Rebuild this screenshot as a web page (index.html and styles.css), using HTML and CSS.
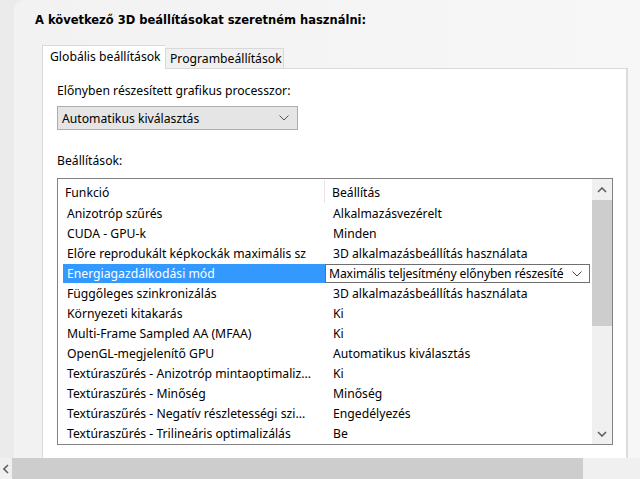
FILE: index.html
```html
<!DOCTYPE html>
<html lang="hu">
<head>
<meta charset="utf-8">
<title>3D beállítások</title>
<link rel="stylesheet" href="styles.css">
</head>
<body>
<div class="screen">
  <div class="panel">
    <h1 class="title">A következő 3D beállításokat szeretném használni:</h1>
    <div class="tabs">
      <div class="tab active">Globális beállítások</div>
      <div class="tab">Programbeállítások</div>
    </div>
    <div class="tabpanel">
      <div class="label gpu-label">Előnyben részesített grafikus processzor:</div>
      <div class="dropdown">
        <span>Automatikus kiválasztás</span>
        <svg class="chev" width="10" height="6" viewBox="0 0 10 6"><path d="M0.5 0.5 L5 5 L9.5 0.5" fill="none" stroke="#555" stroke-width="1"/></svg>
      </div>
      <div class="label settings-label">Beállítások:</div>
      <div class="listbox">
        <div class="list">
          <div class="row header"><div class="c1">Funkció</div><div class="divider"></div><div class="c2">Beállítás</div></div>
          <div class="row"><div class="c1">Anizotróp szűrés</div><div class="c2">Alkalmazásvezérelt</div></div>
          <div class="row"><div class="c1">CUDA - GPU-k</div><div class="c2">Minden</div></div>
          <div class="row"><div class="c1">Előre reprodukált képkockák maximális sz</div><div class="c2">3D alkalmazásbeállítás használata</div></div>
          <div class="row selected">
            <div class="c1"><div class="sel">Energiagazdálkodási mód</div></div>
            <div class="c2"><div class="combo"><span>Maximális teljesítmény előnyben részesíté</span><svg class="chev" width="10" height="6" viewBox="0 0 10 6"><path d="M0.5 0.5 L5 5 L9.5 0.5" fill="none" stroke="#444" stroke-width="1"/></svg></div></div>
          </div>
          <div class="row"><div class="c1">Függőleges szinkronizálás</div><div class="c2">3D alkalmazásbeállítás használata</div></div>
          <div class="row"><div class="c1">Környezeti kitakarás</div><div class="c2">Ki</div></div>
          <div class="row"><div class="c1">Multi-Frame Sampled AA (MFAA)</div><div class="c2">Ki</div></div>
          <div class="row"><div class="c1">OpenGL-megjelenítő GPU</div><div class="c2">Automatikus kiválasztás</div></div>
          <div class="row"><div class="c1">Textúraszűrés - Anizotróp mintaoptimaliz...</div><div class="c2">Ki</div></div>
          <div class="row"><div class="c1">Textúraszűrés - Minőség</div><div class="c2">Minőség</div></div>
          <div class="row"><div class="c1">Textúraszűrés - Negatív részletességi szi...</div><div class="c2">Engedélyezés</div></div>
          <div class="row"><div class="c1">Textúraszűrés - Trilineáris optimalizálás</div><div class="c2">Be</div></div>
        </div>
        <div class="vscroll">
          <div class="arrow up"><svg width="10" height="6" viewBox="0 0 10 6"><path d="M1 5 L5 1 L9 5" fill="none" stroke="#606060" stroke-width="1.6"/></svg></div>
          <div class="track"><div class="thumb"></div></div>
          <div class="arrow down"><svg width="10" height="6" viewBox="0 0 10 6"><path d="M1 1 L5 5 L9 1" fill="none" stroke="#606060" stroke-width="1.6"/></svg></div>
        </div>
      </div>
    </div>
  </div>
  <div class="hscroll">
    <div class="harrow"><svg width="6" height="10" viewBox="0 0 6 10"><path d="M5 1 L1 5 L5 9" fill="none" stroke="#606060" stroke-width="1.6"/></svg></div>
    <div class="hthumb"></div>
  </div>
</div>
</body>
</html>
```

FILE: styles.css
```css
html, body {
  margin: 0;
  padding: 0;
}
body {
  background: #ebebeb;
  font-family: "Noto Sans", "Liberation Sans", sans-serif;
  font-size: 12.2px;
  color: #000;
}
.screen {
  width: 640px;
  height: 479px;
  overflow: hidden;
  display: flex;
  flex-direction: column;
}
.panel {
  margin-left: 14px;
  height: 458px;
  flex: none;
  background: linear-gradient(to right, #f2f2f2, #f7f7f7);
  border-top-left-radius: 10px;
  overflow: hidden;
  display: flex;
  flex-direction: column;
}
.title {
  margin: 12px 0 0 21px;
  font-family: "DejaVu Sans", sans-serif;
  font-weight: bold;
  font-size: 11.5px;
  line-height: 16px;
  height: 16px;
  white-space: nowrap;
}
.tabs {
  display: flex;
  align-items: flex-end;
  margin: 17px 0 0 28px;
  height: 23px;
}
.tab {
  height: 20px;
  line-height: 20px;
  padding: 0 4px;
  background: #f0f0f0;
  border: 1px solid #d9d9d9;
  border-bottom: none;
  white-space: nowrap;
  box-sizing: border-box;
  width: 119px;
}
.tab.active {
  height: 24px;
  line-height: 22px;
  background: #fff;
  border-color: #d9d9d9;
  width: 123px;
  padding-left: 7px;
  margin-bottom: -1px;
  position: relative;
  z-index: 1;
  border-right: none;
}
.tabpanel {
  margin-left: 28px;
  width: 586px;
  flex: 1;
  background: #fff;
  border: 1px solid #d9d9d9;
  border-right: 2px solid #dcdcdc;
  border-bottom: none;
  box-sizing: border-box;
  padding-left: 14px;
}
.label {
  line-height: 16px;
  height: 16px;
}
.gpu-label {
  margin-top: 14px;
}
.dropdown {
  margin-top: 7px;
  width: 241px;
  height: 24px;
  box-sizing: border-box;
  background: #e5e5e5;
  border: 1px solid #adadad;
  display: flex;
  align-items: center;
  justify-content: space-between;
  padding: 0 8px 0 4px;
}
.settings-label {
  margin-top: 23px;
}
.listbox {
  margin-top: 9px;
  width: 556px;
  height: 267px;
  box-sizing: border-box;
  border: 1px solid #828282;
  display: flex;
  background: #fff;
}
.list {
  width: 534px;
  flex: none;
  overflow: hidden;
}
.row {
  display: flex;
  height: 20px;
  line-height: 20px;
  white-space: nowrap;
}
.row.header {
  height: 25px;
  line-height: 23px;
  padding-top: 2px;
  box-sizing: border-box;
}
.c1 {
  width: 267px;
  box-sizing: border-box;
  flex: none;
  padding-left: 9px;
  overflow: hidden;
}
.c2 {
  flex: 1;
  padding-left: 8px;
  overflow: hidden;
}
.header .c1 {
  width: 266px;
  padding-left: 7px;
}
.header .c2 {
  padding-left: 7px;
}
.divider {
  width: 1px;
  height: 23px;
  margin-top: -1px;
  background: #e5e5e5;
  flex: none;
}
.row.selected .c1 {
  padding-left: 5px;
}
.sel {
  background: #3399ff;
  color: #fff;
  padding-left: 4px;
  height: 19px;
  line-height: 19px;
}
.row.selected .c2 {
  padding-left: 0;
}
.combo {
  width: 265px;
  height: 19px;
  box-sizing: border-box;
  border: 1px solid #6f6f6f;
  display: flex;
  align-items: center;
  padding: 0 7px 0 3px;
  line-height: 17px;
}
.combo span {
  white-space: nowrap;
  letter-spacing: -0.15px;
}
.combo .chev {
  margin-left: auto;
  flex: none;
}
.vscroll {
  width: 20px;
  flex: none;
  display: flex;
  flex-direction: column;
  background: #f0f0f0;
}
.arrow {
  height: 21px;
  display: flex;
  align-items: center;
  justify-content: center;
  flex: none;
}
.track {
  flex: 1;
}
.thumb {
  width: 20px;
  height: 126px;
  background: #cdcdcd;
}
.hscroll {
  flex: 1;
  background: #f0f0f0;
  display: flex;
  align-items: stretch;
}
.harrow {
  width: 12px;
  display: flex;
  align-items: center;
  justify-content: center;
  flex: none;
}
.hthumb {
  width: 571px;
  background: #cdcdcd;
}
```
